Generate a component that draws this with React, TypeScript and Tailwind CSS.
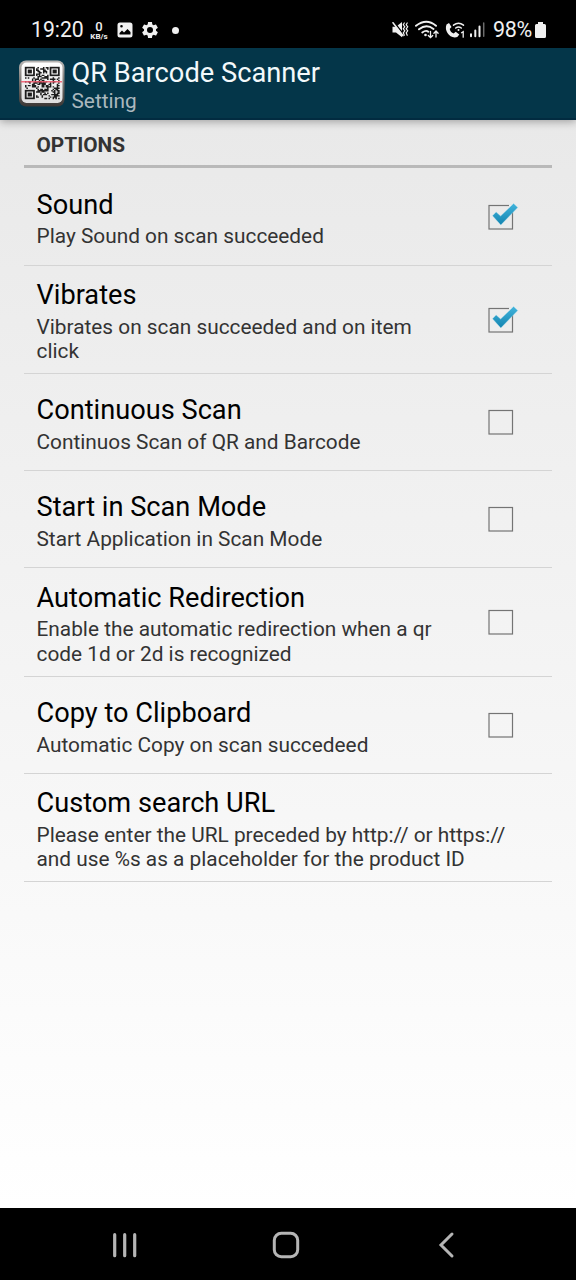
const seed = (x: number, y: number) => (x * 73 + y * 151 + x * y * 37 + ((x * x) ^ (y * 13)) * 11) % 17 < 9;
const inFinder = (x: number, y: number) => (x < 8 && y < 8) || (x > 16 && y < 8) || (x < 8 && y > 16);
const modules: string[] = [];
for (let y = 0; y < 25; y++) for (let x = 0; x < 25; x++) if (!inFinder(x, y) && seed(x, y)) modules.push(`M${x} ${y}h1.1v1.1h-1.1z`);

function QrLogo() {
  return (
    <svg className="h-[48px] w-[48px] shrink-0" viewBox="0 0 48 48">
      <defs>
        <linearGradient id="rim" x1="0" y1="0" x2="0" y2="1">
          <stop offset="0" stopColor="#b9b7b5" />
          <stop offset="0.5" stopColor="#77736f" />
          <stop offset="1" stopColor="#3a3634" />
        </linearGradient>
        <linearGradient id="plate" x1="0" y1="0" x2="0" y2="1">
          <stop offset="0" stopColor="#ffffff" />
          <stop offset="1" stopColor="#dedede" />
        </linearGradient>
      </defs>
      <rect x="1" y="1.500" width="45.500" height="46" rx="7" fill="url(#rim)" />
      <rect x="3.500" y="3.500" width="41" height="40.500" rx="5" fill="url(#plate)" />
      <g transform="translate(7 8) scale(1.380 1.280)" fill="#1c1c1c">
        <path d={modules.join("")} />
        {[[0, 0], [18, 0], [0, 18]].map(([x, y]) => (
          <g key={`${x}-${y}`}>
            <rect x={x + 0.5} y={y + 0.5} width="6" height="6" fill="none" stroke="#1c1c1c" strokeWidth="1.300" />
            <rect x={x + 2} y={y + 2} width="3" height="3" />
          </g>
        ))}
      </g>
      <path d="M3 22.700h41" stroke="#f0566a" strokeWidth="1.500" opacity="0.850" />
    </svg>
  );
}

function StatusBar() {
  return (
    <div className="flex h-12 items-center bg-black pt-3 text-[#f0f0f0]">
      <span className="ml-[31px] w-[58px] text-[21.200px] leading-[24px] whitespace-nowrap">19:20</span>
      <div className="flex w-[20px] flex-col items-center">
        <span className="text-[13px] leading-[13px] font-medium">0</span>
        <span className="text-[8px] leading-[8px] font-bold">KB/s</span>
      </div>
      <svg className="ml-[7.500px] h-[16px] w-[16px]" viewBox="0 0 16 16">
        <path fill="currentColor" fillRule="evenodd" d="M3 .5h10a2.500 2.500 0 0 1 2.500 2.500v10a2.500 2.500 0 0 1-2.500 2.500H3A2.500 2.500 0 0 1 .5 13V3A2.500 2.500 0 0 1 3 .5M2.500 12.500h11V10l-3-3-3.500 3.500L5 8.500l-2.500 2.500zM4.500 3a1.300 1.300 0 1 0 0 2.600 1.300 1.300 0 0 0 0-2.600" />
      </svg>
      <svg className="ml-[7px] h-[20px] w-[20px]" viewBox="0 0 24 24">
        <path fill="currentColor" d="M19.140 12.940c.04-.3.060-.61.060-.94 0-.32-.02-.64-.07-.94l2.030-1.580c.18-.14.230-.41.120-.61l-1.920-3.320c-.12-.22-.37-.29-.59-.22l-2.390.96c-.5-.38-1.030-.7-1.620-.94l-.36-2.540c-.04-.24-.24-.41-.48-.41h-3.840c-.24 0-.43.170-.47.410l-.36 2.540c-.59.240-1.130.570-1.620.940l-2.390-.96c-.22-.08-.47 0-.59.220L2.740 8.870c-.12.210-.08.470.120.610l2.030 1.580c-.05.300-.09.630-.09.940s.02.640.070.940l-2.030 1.580c-.18.140-.23.410-.12.610l1.920 3.320c.12.220.370.290.590.220l2.390-.96c.5.380 1.030.700 1.620.940l.36 2.540c.05.240.240.410.480.410h3.840c.24 0 .44-.17.470-.41l.36-2.540c.59-.24 1.130-.56 1.620-.94l2.390.96c.22.080.470 0 .59-.22l1.920-3.320c.12-.22.070-.47-.12-.61zM12 15.600A3.600 3.600 0 1 1 12 8.400a3.600 3.600 0 0 1 0 7.200" />
      </svg>
      <span className="ml-[12px] h-[7px] w-[7px] rounded-full bg-[#f0f0f0]" />
      <svg className="mr-[3px] ml-auto h-[24px] w-[100px]" viewBox="390 18 100 24" fill="none" stroke="currentColor" strokeLinecap="round">
        <path d="M392.500 26.800h3.500l6-4.800v15.300l-6-4.800h-3.500z" fill="currentColor" stroke="none" />
        <path d="M393.500 21.500l11 14" stroke="#000" strokeWidth="1.500" />
        <path d="M393 22.700l10 13" strokeWidth="1.500" />
        <path d="M404.300 23l-1 1.800 1.500 2-1.500 2 1.500 2-1.500 2 1 2.500M407.200 23l-1 1.800 1.500 2-1.500 2 1.500 2-1.500 2 1 2.500" strokeWidth="1.200" />
        <path d="M416 25.800q10.500-8 20 0M419 29.300q7.500-5.800 14.500-.3M422.300 32.500q3.700-2.800 6-.8" strokeWidth="1.900" />
        <circle cx="425.500" cy="35" r="1.300" fill="currentColor" stroke="none" />
        <path d="M430.500 31.500v6M428.300 35.500l2.200 2.200 2.200-2.200M436 37v-6M433.900 33.200l2.100-2.200 2.100 2.200" strokeWidth="1.300" />
        <path d="M446.500 24.500l2.500-1.500 2.500 4-1.800 2c.8 2.500 1.800 3.700 4 4.500l2-1.700 3.600 2.700-2 2.500c-7 2.500-13.500-6-10.800-12.500z" fill="currentColor" stroke="none" />
        <path d="M453.500 25.200q5-4 10 0M455.700 28q2.800-2.200 5.600 0" strokeWidth="1.500" />
        <circle cx="458.500" cy="30" r="1" fill="currentColor" stroke="none" />
        <path d="M461.500 32.700l1.700-1v5.500" strokeWidth="1.300" />
        <path d="M471 34.300v2M475.300 30.500v5.800M479.500 26.500v9.800" strokeWidth="2" />
        <path d="M483.700 23v13.300" strokeWidth="1.500" stroke="#6c6c6c" />
      </svg>
      <span className="w-[41px] text-[21.500px] leading-[24px] tracking-[-0.300px] whitespace-nowrap">98%</span>
      <svg className="mr-[29px] h-[18px] w-[13px]" viewBox="0 0 13 18">
        <path fill="currentColor" d="M4 1h5v2h1.500A1.500 1.500 0 0 1 12 4.500v11a1.500 1.500 0 0 1-1.500 1.500h-8A1.500 1.500 0 0 1 1 15.500v-11A1.500 1.500 0 0 1 2.500 3H4z" />
      </svg>
    </div>
  );
}

function Checkbox({ checked }: { checked: boolean }) {
  return (
    <svg className="h-[32px] w-[32px] shrink-0" viewBox="0 0 32 32">
      <defs>
        <linearGradient id="tick" x1="0" y1="0" x2="0" y2="1">
          <stop offset="0" stopColor="#42b4dc" />
          <stop offset="1" stopColor="#1384b0" />
        </linearGradient>
      </defs>
      <rect x="1" y="4.500" width="23.500" height="23.500" fill="none" stroke="#747474" strokeWidth="1.200" />
      {checked && (
        <>
          <path d="M21 4.500h3.500v6" stroke="#eaf1f3" strokeWidth="2" fill="none" />
          <path d="M4.500 14.800l3.600-3.900 4.500 4.100L25.600 2.500l4.200 4L12.800 24z" fill="url(#tick)" stroke="#b9e2f0" strokeWidth="0.400" />
        </>
      )}
    </svg>
  );
}

type Option = { title: string; summary: string[]; checked?: boolean; height: string };
const options: Option[] = [
  { title: "Sound", summary: ["Play Sound on scan succeeded"], checked: true, height: "h-[98px]" },
  { title: "Vibrates", summary: ["Vibrates on scan succeeded and on item", "click"], checked: true, height: "h-[108px]" },
  { title: "Continuous Scan", summary: ["Continuos Scan of QR and Barcode"], checked: false, height: "h-[97px]" },
  { title: "Start in Scan Mode", summary: ["Start Application in Scan Mode"], checked: false, height: "h-[97px]" },
  { title: "Automatic Redirection", summary: ["Enable the automatic redirection when a qr", "code 1d or 2d is recognized"], checked: false, height: "h-[109px]" },
  { title: "Copy to Clipboard", summary: ["Automatic Copy on scan succedeed"], checked: false, height: "h-[97px]" },
  { title: "Custom search URL", summary: ["Please enter the URL preceded by http:// or https://", "and use %s as a placeholder for the product ID"], height: "h-[108px]" },
];

export default function App() {
  return (
    <div className="flex h-[1280px] w-[576px] flex-col overflow-hidden bg-black font-['Roboto',sans-serif]">
      <StatusBar />
      <header className="relative z-10 flex h-[72px] items-center border-b-2 border-[#022b40] bg-[#043649] pl-[18px] shadow-[0_2px_8px_rgba(0,0,0,0.3)]">
        <QrLogo />
        <div className="ml-[5.500px] pt-[5px]">
          <h1 className="text-[27.250px] leading-[31px] whitespace-nowrap text-[#f3f9fb]">QR Barcode Scanner</h1>
          <p className="text-[20.800px] leading-[24px] text-[#abb8be]">Setting</p>
        </div>
      </header>
      <main className="flex-1 bg-linear-to-b from-[#e9e9e9] to-white px-6">
        <h2 className="h-[48px] border-b-[3px] border-[#b9b9b9] pt-[12px] pl-[12.500px] text-[20.800px] leading-[26px] font-bold text-[#333]">OPTIONS</h2>
        {options.map((o) => (
          <div key={o.title} className={`flex items-center border-b border-[#d4d4d4] pr-[32px] pl-[12.500px] ${o.height}`}>
            <div className="flex-1 pt-[4px] whitespace-nowrap">
              <div className="mb-[3.500px] text-[27.200px] leading-[32px] text-black">{o.title}</div>
              {o.summary.map((line) => (
                <div key={line} className="text-[20.830px] leading-[24.500px] text-[#333]">{line}</div>
              ))}
            </div>
            {o.checked !== undefined && <Checkbox checked={o.checked} />}
          </div>
        ))}
      </main>
      <nav className="flex h-[72px] items-center bg-black pt-[2px]">
        <svg className="ml-[112px] h-[26px] w-[26px]" viewBox="0 0 26 26" stroke="#b5b5b5" strokeWidth="3.200" strokeLinecap="round">
          <path d="M2.700 2.700v21M12.700 2.700v21M22.700 2.700v21" />
        </svg>
        <svg className="ml-[134px] h-[28px] w-[28px]" viewBox="0 0 28 28">
          <rect x="2.300" y="2.300" width="23.400" height="23.400" rx="7" fill="none" stroke="#b5b5b5" strokeWidth="3" />
        </svg>
        <svg className="ml-[138px] h-[28px] w-[18px]" viewBox="0 0 18 28" fill="none" stroke="#b5b5b5" strokeWidth="3" strokeLinecap="round">
          <path d="M14 3L3 14l11 11" />
        </svg>
      </nav>
    </div>
  );
}
